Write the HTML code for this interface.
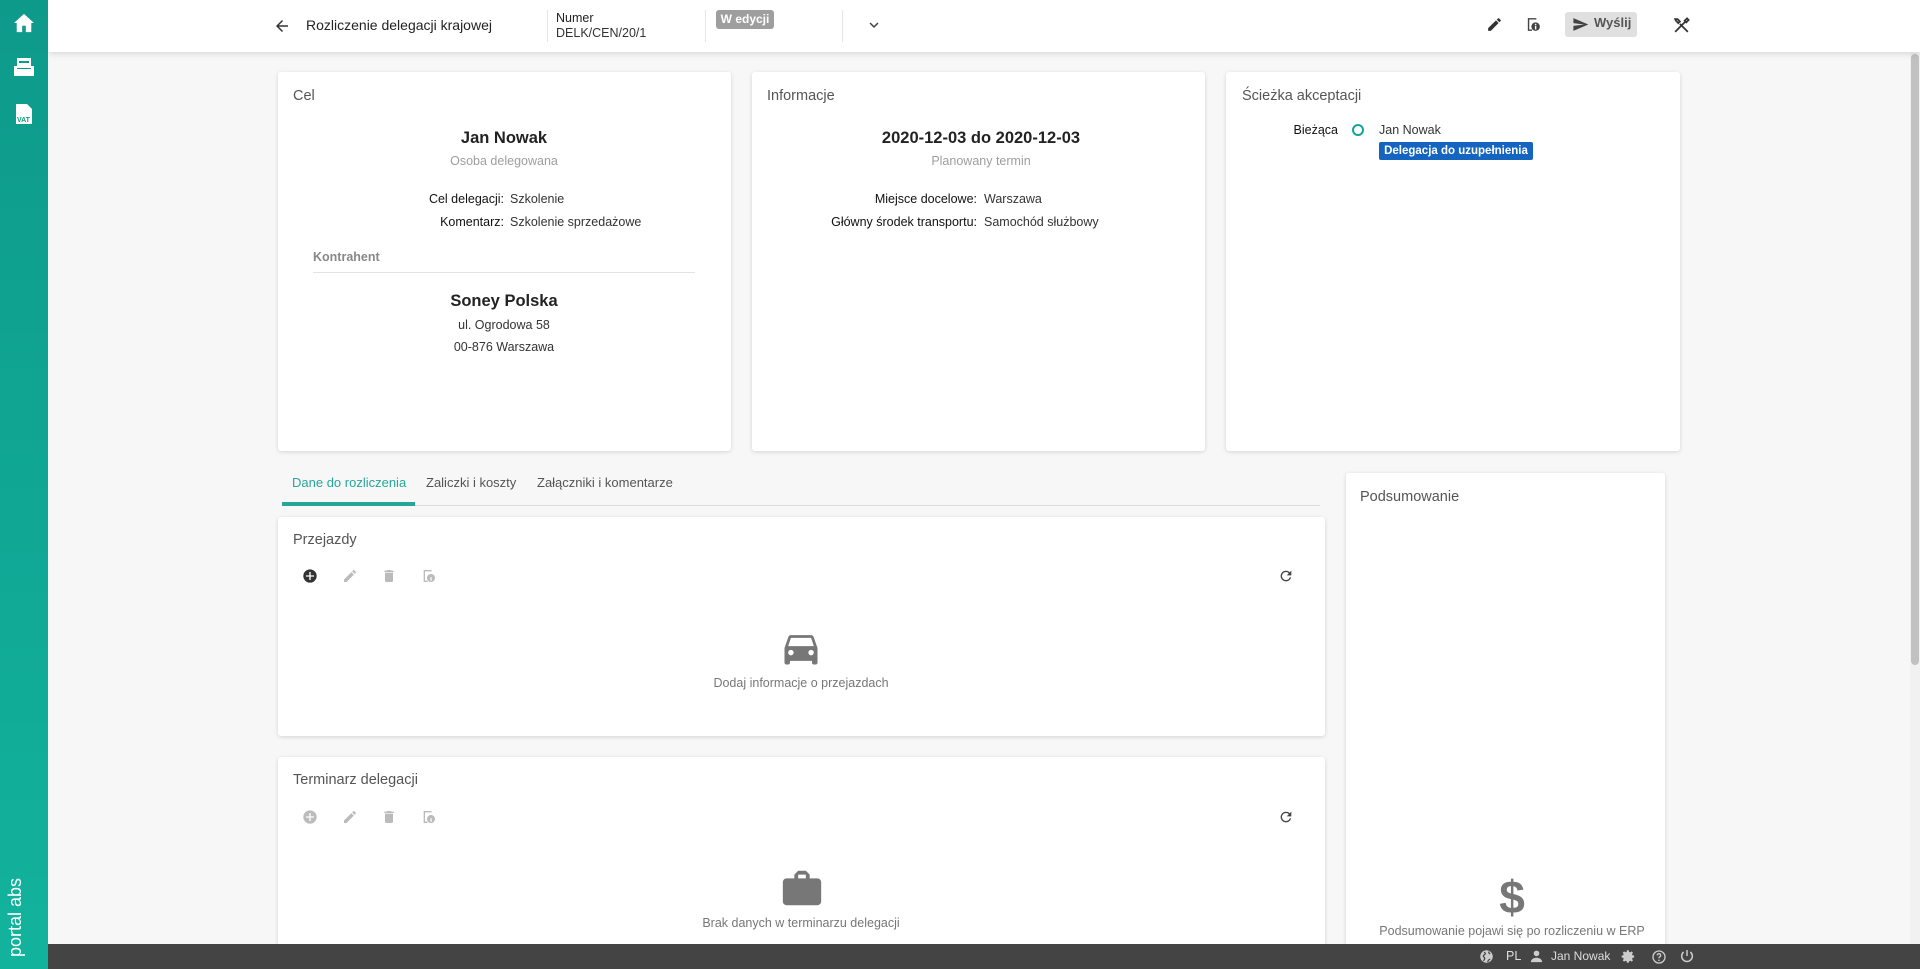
<!DOCTYPE html>
<html><head><meta charset="utf-8"><style>
*{margin:0;padding:0;box-sizing:border-box}
html,body{width:1920px;height:969px;overflow:hidden}
body{background:#f7f7f7;font-family:"Liberation Sans",sans-serif;color:#222;position:relative}
.a{position:absolute;white-space:nowrap}
.side{position:absolute;left:0;top:0;width:48px;height:969px;background:linear-gradient(#0e9a8b,#12b39d);z-index:6}
.top{position:absolute;left:48px;top:0;width:1872px;height:52px;background:#fff;box-shadow:0 2px 6px rgba(0,0,0,.12);z-index:4}
.card{position:absolute;background:#fff;border-radius:3px;box-shadow:0 1px 4px rgba(0,0,0,.14)}
.t{font-size:14.5px;color:#555}
.c{transform:translateX(-50%);text-align:center}
.lab{font-size:12.5px;color:#111;text-align:right}
.val{font-size:12.5px;color:#333}
.bot{position:absolute;left:48px;top:944px;width:1872px;height:25px;background:#444;z-index:5}
</style></head><body>
<div class="side">
<svg class="a" style="left:13px;top:13px" width="22" height="20" viewBox="0 0 24 22"><path d="M12 1 1 11h3v10h6v-7h4v7h6V11h3z" fill="#fff"/></svg>
<svg class="a" style="left:13px;top:57px" width="22" height="20" viewBox="0 0 22 20"><rect x="4" y="1" width="14" height="10" fill="#fff"/><rect x="6" y="4" width="10" height="2" fill="#0e9a8b"/><path d="M1 9h3v3h14V9h3v10H1z" fill="#fff"/></svg>
<svg class="a" style="left:15px;top:103px" width="18" height="22" viewBox="0 0 18 22"><path d="M1 1h11l5 5v15H1z" fill="#fff"/><text x="2" y="19" font-size="7" font-weight="bold" fill="#0e9a8b" font-family="Liberation Sans">VAT</text></svg>
<div class="a" style="left:5px;top:957px;transform:rotate(-90deg);transform-origin:0 0;color:#fff;font-size:18px;width:90px">portal abs</div>
</div>
<div class="top">
<svg class="a" style="left:225px;top:17px" width="18" height="18" viewBox="0 0 24 24"><path d="M20 11H7.8l5.6-5.6L12 4l-8 8 8 8 1.4-1.4L7.8 13H20z" fill="#333"/></svg>
<div class="a" style="left:258px;top:17px;font-size:14px;color:#222">Rozliczenie delegacji krajowej</div>
<div class="a" style="left:499px;top:10px;width:1px;height:32px;background:#e6e6e6"></div>
<div class="a" style="left:508px;top:11px;font-size:12.5px;color:#222">Numer</div>
<div class="a" style="left:508px;top:26px;font-size:12.5px;color:#333">DELK/CEN/20/1</div>
<div class="a" style="left:657px;top:10px;width:1px;height:32px;background:#e6e6e6"></div>
<div class="a" style="left:668px;top:10px;width:58px;height:19px;background:#9e9e9e;border-radius:3px;color:#fff;font-size:12px;font-weight:bold;text-align:center;line-height:19px">W edycji</div>
<div class="a" style="left:794px;top:10px;width:1px;height:32px;background:#e6e6e6"></div>
<svg class="a" style="left:817px;top:16px" width="18" height="18" viewBox="0 0 24 24"><path d="M7.4 8.6 12 13.2l4.6-4.6L18 10l-6 6-6-6z" fill="#444"/></svg>
<svg class="a" style="left:1438px;top:16px" width="17" height="17" viewBox="0 0 24 24"><path d="M3 17.2V21h3.8L17.8 9.9l-3.7-3.7zM20.7 7a1 1 0 0 0 0-1.4l-2.3-2.3a1 1 0 0 0-1.4 0l-1.8 1.8 3.7 3.7z" fill="#333"/></svg>
<svg class="a" style="left:1477px;top:16px" width="17" height="17" viewBox="0 0 24 24"><path d="M4 3h12v2H6v14h4v2H4z" fill="#444"/><circle cx="15" cy="15" r="6" fill="#444"/><rect x="14" y="14" width="2" height="5" fill="#fff"/><rect x="14" y="11" width="2" height="2" fill="#fff"/></svg>
<div class="a" style="left:1517px;top:12px;width:72px;height:25px;background:#e0e0e0;border-radius:3px"></div>
<svg class="a" style="left:1524px;top:16px" width="17" height="17" viewBox="0 0 24 24"><path d="M2 21 23 12 2 3v7l15 2-15 2z" fill="#444"/></svg>
<div class="a" style="left:1546px;top:15px;font-size:13px;color:#555;font-weight:bold">Wyślij</div>
<svg class="a" style="left:1624px;top:16px" width="19" height="19" viewBox="0 0 24 24"><path d="M4 20 14 10M10 10 20 20M14 10l3-3 1 1 3-3-2-2-3 3 1 1M4 4l3 0 3 3-2 2-3-3z" stroke="#333" stroke-width="2.2" fill="none"/></svg>
</div>
<div class="a" style="left:1910px;top:52px;width:10px;height:892px;background:#f1f1f1"></div>
<div class="a" style="left:1911px;top:54px;width:8px;height:611px;background:#c1c1c1;border-radius:4px"></div>

<div class="card" style="left:278px;top:72px;width:453px;height:379px">
<div class="a t" style="left:15px;top:16px">Cel</div>
<div class="a c" style="left:226px;top:57px;font-size:16.5px;font-weight:bold">Jan Nowak</div>
<div class="a c" style="left:226px;top:82px;font-size:12.5px;color:#9e9e9e">Osoba delegowana</div>
<div class="a lab" style="right:227px;top:120px">Cel delegacji:</div>
<div class="a val" style="left:232px;top:120px">Szkolenie</div>
<div class="a lab" style="right:227px;top:143px">Komentarz:</div>
<div class="a val" style="left:232px;top:143px">Szkolenie sprzedażowe</div>
<div class="a" style="left:35px;top:178px;font-size:12.5px;color:#888;font-weight:bold">Kontrahent</div>
<div class="a" style="left:35px;top:200px;width:382px;height:1px;background:#e3e3e3"></div>
<div class="a c" style="left:226px;top:220px;font-size:16.5px;font-weight:bold">Soney Polska</div>
<div class="a c val" style="left:226px;top:246px">ul. Ogrodowa 58</div>
<div class="a c val" style="left:226px;top:268px">00-876 Warszawa</div>
</div>

<div class="card" style="left:752px;top:72px;width:453px;height:379px">
<div class="a t" style="left:15px;top:16px">Informacje</div>
<div class="a c" style="left:229px;top:57px;font-size:16.5px;font-weight:bold">2020-12-03 do 2020-12-03</div>
<div class="a c" style="left:229px;top:82px;font-size:12.5px;color:#9e9e9e">Planowany termin</div>
<div class="a lab" style="right:228px;top:120px">Miejsce docelowe:</div>
<div class="a val" style="left:232px;top:120px">Warszawa</div>
<div class="a lab" style="right:228px;top:143px">Główny środek transportu:</div>
<div class="a val" style="left:232px;top:143px">Samochód służbowy</div>
</div>

<div class="card" style="left:1226px;top:72px;width:454px;height:379px">
<div class="a t" style="left:16px;top:16px">Ścieżka akceptacji</div>
<div class="a lab" style="right:342px;top:51px">Bieżąca</div>
<div class="a" style="left:126px;top:52px;width:12px;height:12px;border:2px solid #12a596;border-radius:50%"></div>
<div class="a val" style="left:153px;top:51px">Jan Nowak</div>
<div class="a" style="left:153px;top:70px;width:154px;height:18px;background:#1565c0;border-radius:2px;color:#fff;font-size:11.5px;font-weight:bold;line-height:18px;text-align:center">Delegacja do uzupełnienia</div>
</div>

<div class="a" style="left:282px;top:505px;width:1038px;height:1px;background:#ddd"></div>
<div class="a" style="left:282px;top:502px;width:133px;height:4px;background:#26a69a"></div>
<div class="a" style="left:292px;top:475px;font-size:13px;color:#26a69a">Dane do rozliczenia</div>
<div class="a" style="left:426px;top:475px;font-size:13px;color:#555">Zaliczki i koszty</div>
<div class="a" style="left:537px;top:475px;font-size:13px;color:#555">Załączniki i komentarze</div>

<div class="card" style="left:278px;top:517px;width:1047px;height:219px">
<div class="a t" style="left:15px;top:15px">Przejazdy</div>
<svg class="a" style="left:24px;top:51px" width="16" height="16" viewBox="0 0 24 24"><circle cx="12" cy="12" r="10" fill="#333"/><path d="M11 6h2v5h5v2h-5v5h-2v-5H6v-2h5z" fill="#fff"/></svg>
<svg class="a" style="left:64px;top:51px" width="16" height="16" viewBox="0 0 24 24"><path d="M3 17.2V21h3.8L17.8 9.9l-3.7-3.7zM20.7 7a1 1 0 0 0 0-1.4l-2.3-2.3a1 1 0 0 0-1.4 0l-1.8 1.8 3.7 3.7z" fill="#bbb"/></svg>
<svg class="a" style="left:103px;top:51px" width="16" height="16" viewBox="0 0 24 24"><path d="M6 19a2 2 0 0 0 2 2h8a2 2 0 0 0 2-2V7H6zM19 4h-3.5l-1-1h-5l-1 1H5v2h14z" fill="#bbb"/></svg>
<svg class="a" style="left:143px;top:51px" width="16" height="16" viewBox="0 0 24 24"><path d="M4 3h12v2H6v14h4v2H4z" fill="#bbb"/><circle cx="15" cy="15" r="6" fill="#bbb"/><rect x="14" y="14" width="2" height="5" fill="#fff"/></svg>
<svg class="a" style="left:1000px;top:51px" width="16" height="16" viewBox="0 0 24 24"><path d="M17.6 6.4A8 8 0 1 0 19.7 14h-2.1a6 6 0 1 1-1.4-6.2L13 11h7V4z" fill="#444"/></svg>
<svg class="a" style="left:501px;top:109px" width="44" height="44" viewBox="0 0 24 24"><path d="M18.9 6c-.2-.6-.8-1-1.4-1h-11c-.7 0-1.2.4-1.4 1L3 12v8c0 .6.4 1 1 1h1c.6 0 1-.4 1-1v-1h12v1c0 .6.4 1 1 1h1c.6 0 1-.4 1-1v-8zM6.5 16a1.5 1.5 0 1 1 0-3 1.5 1.5 0 0 1 0 3zm11 0a1.5 1.5 0 1 1 0-3 1.5 1.5 0 0 1 0 3zM5 11l1.5-4.5h11L19 11z" fill="#777"/></svg>
<div class="a c" style="left:523px;top:159px;font-size:12.5px;color:#777">Dodaj informacje o przejazdach</div>
</div>

<div class="card" style="left:278px;top:757px;width:1047px;height:200px">
<div class="a t" style="left:15px;top:15px">Terminarz delegacji</div>
<svg class="a" style="left:24px;top:52px" width="16" height="16" viewBox="0 0 24 24"><circle cx="12" cy="12" r="10" fill="#bbb"/><path d="M11 6h2v5h5v2h-5v5h-2v-5H6v-2h5z" fill="#fff"/></svg>
<svg class="a" style="left:64px;top:52px" width="16" height="16" viewBox="0 0 24 24"><path d="M3 17.2V21h3.8L17.8 9.9l-3.7-3.7zM20.7 7a1 1 0 0 0 0-1.4l-2.3-2.3a1 1 0 0 0-1.4 0l-1.8 1.8 3.7 3.7z" fill="#bbb"/></svg>
<svg class="a" style="left:103px;top:52px" width="16" height="16" viewBox="0 0 24 24"><path d="M6 19a2 2 0 0 0 2 2h8a2 2 0 0 0 2-2V7H6zM19 4h-3.5l-1-1h-5l-1 1H5v2h14z" fill="#bbb"/></svg>
<svg class="a" style="left:143px;top:52px" width="16" height="16" viewBox="0 0 24 24"><path d="M4 3h12v2H6v14h4v2H4z" fill="#bbb"/><circle cx="15" cy="15" r="6" fill="#bbb"/><rect x="14" y="14" width="2" height="5" fill="#fff"/></svg>
<svg class="a" style="left:1000px;top:52px" width="16" height="16" viewBox="0 0 24 24"><path d="M17.6 6.4A8 8 0 1 0 19.7 14h-2.1a6 6 0 1 1-1.4-6.2L13 11h7V4z" fill="#444"/></svg>
<svg class="a" style="left:501px;top:108px" width="46" height="46" viewBox="0 0 24 24"><path d="M20 7h-4V5l-2-2h-4L8 5v2H4c-1.1 0-2 .9-2 2v10c0 1.1.9 2 2 2h16c1.1 0 2-.9 2-2V9c0-1.1-.9-2-2-2zm-6 0h-4V5h4z" fill="#777"/></svg>
<div class="a c" style="left:523px;top:159px;font-size:12.5px;color:#777">Brak danych w terminarzu delegacji</div>
</div>

<div class="card" style="left:1346px;top:473px;width:319px;height:480px">
<div class="a t" style="left:14px;top:16px">Podsumowanie</div>
<div class="a c" style="left:166px;top:397px;font-size:46px;font-weight:bold;color:#777">$</div>
<div class="a c" style="left:166px;top:451px;font-size:12.5px;color:#777">Podsumowanie pojawi się po rozliczeniu w ERP</div>
</div>

<div class="bot">
<svg class="a" style="left:1431px;top:5px" width="15" height="15" viewBox="0 0 24 24"><circle cx="12" cy="12" r="10" fill="#ccc"/><path d="M8 5c2 1 3 3 1 4s-3 2-1 4 1 4-1 6M16 4c-1 2 0 3 2 4M14 21c0-3 2-4 4-5" stroke="#444" stroke-width="2" fill="none"/></svg>
<div class="a" style="left:1458px;top:5px;font-size:12.5px;color:#ddd">PL</div>
<svg class="a" style="left:1481px;top:5px" width="15" height="15" viewBox="0 0 24 24"><circle cx="12" cy="7" r="4.5" fill="#ccc"/><path d="M3 21c0-5 5-7 9-7s9 2 9 7z" fill="#ccc"/></svg>
<div class="a" style="left:1503px;top:5px;font-size:12px;color:#ddd">Jan Nowak</div>
<svg class="a" style="left:1573px;top:5px" width="15" height="15" viewBox="0 0 24 24"><path d="M12 8a4 4 0 1 0 0 8 4 4 0 0 0 0-8zm9 5.5v-3l-2.6-.5-.8-1.9 1.5-2.2-2.1-2.1-2.2 1.5-1.9-.8L12.5 2h-3l-.5 2.5-1.9.8-2.2-1.5-2.1 2.1 1.5 2.2-.8 1.9L1 10.5v3l2.5.5.8 1.9-1.5 2.2 2.1 2.1 2.200-1.5 1.9.8.5 2.5h3l.5-2.5 1.9-.8 2.2 1.5 2.1-2.1-1.5-2.2.8-1.9z" fill="#ccc"/></svg>
<svg class="a" style="left:1603px;top:5px" width="16" height="16" viewBox="0 0 24 24"><circle cx="12" cy="12" r="9" stroke="#ccc" stroke-width="2" fill="none"/><path d="M9.5 9.5a2.5 2.5 0 1 1 3.5 2.3c-.6.3-1 .8-1 1.5V14" stroke="#ccc" stroke-width="2" fill="none"/><circle cx="12" cy="17" r="1.2" fill="#ccc"/></svg>
<svg class="a" style="left:1631px;top:4px" width="16" height="16" viewBox="0 0 24 24"><path d="M12 3v9M7 6a8 8 0 1 0 10 0" stroke="#ccc" stroke-width="2.2" fill="none"/></svg>
</div>
</body></html>
